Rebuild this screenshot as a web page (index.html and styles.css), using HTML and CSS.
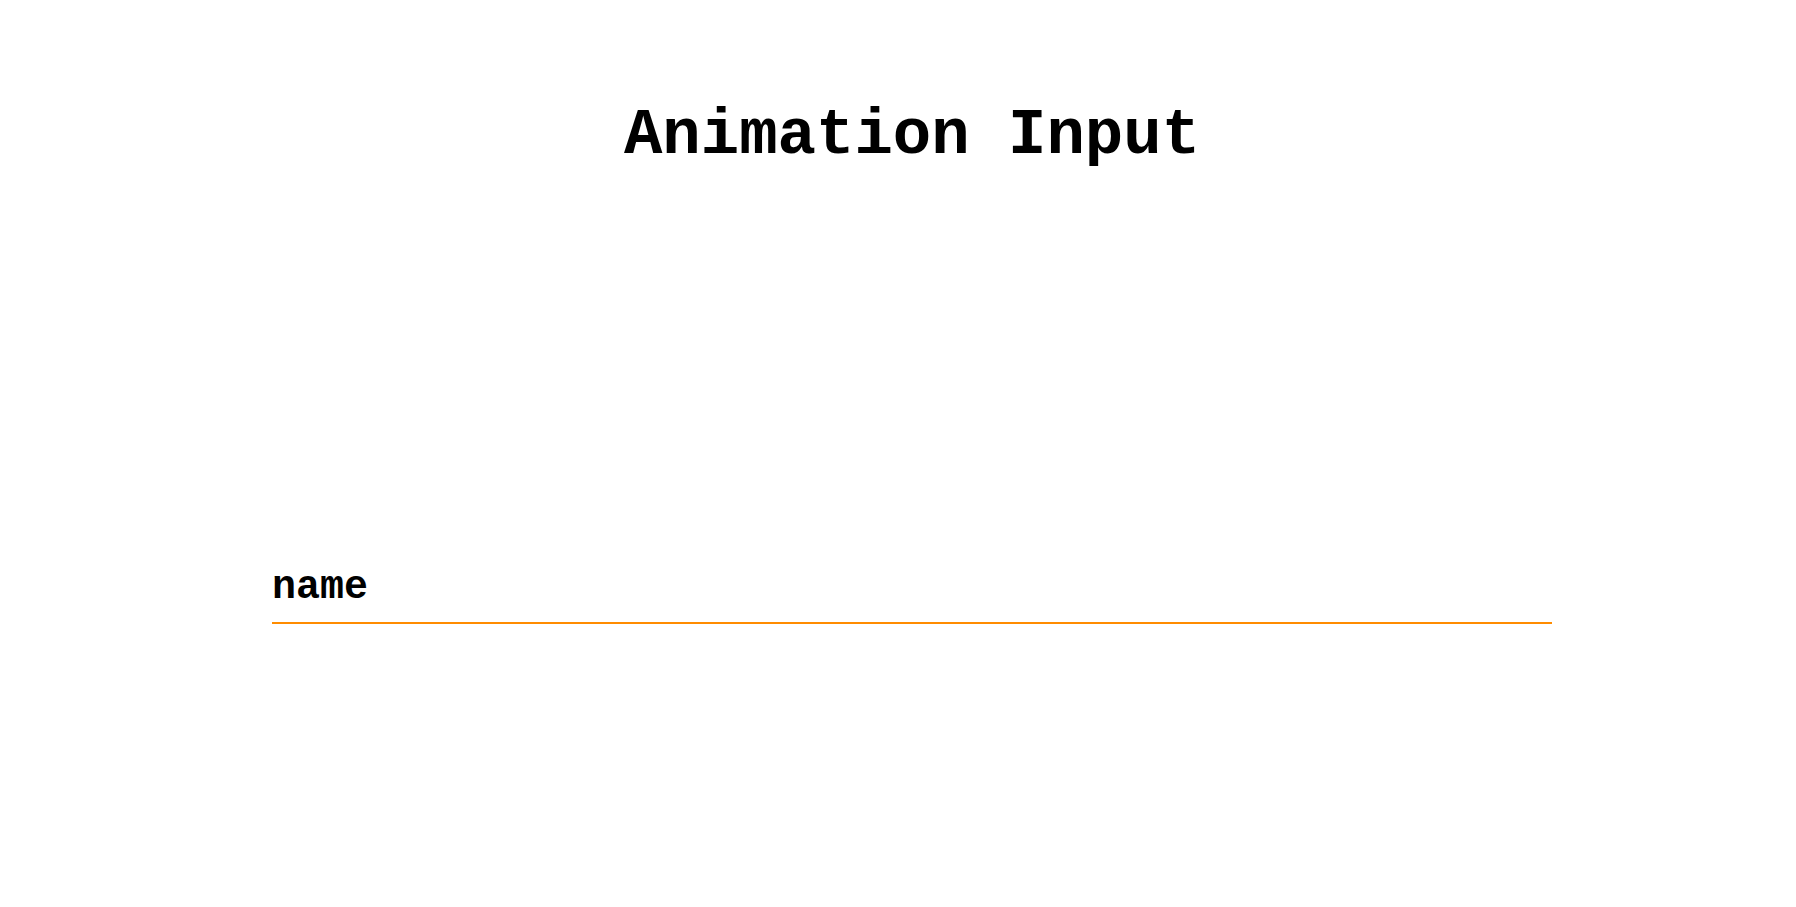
FILE: index.html
```html
<!DOCTYPE html>
<html>
<head>
<meta charset="utf-8">
<link rel="stylesheet" href="styles.css">
</head>
<body>
<main class="page">
  <h1 class="title">Animation Input</h1>
  <div class="field">
    <label class="label" for="name">name</label>
    <div class="underline"></div>
  </div>
</main>
</body>
</html>
```
FILE: styles.css
```css
html, body {
  margin: 0;
  padding: 0;
  background: #ffffff;
}
.page {
  font-family: "Courier New", "Liberation Mono", monospace;
  color: #000;
  display: flex;
  flex-direction: column;
  align-items: center;
  padding-left: 28px;
}
.title {
  margin: 0;
  padding-top: 104px;
  font-size: 64px;
  font-weight: bold;
  line-height: 1;
}
.field {
  width: 1280px;
  margin-top: 400px;
  display: flex;
  flex-direction: column;
}
.label {
  font-size: 40px;
  font-weight: bold;
  line-height: 1;
}
.underline {
  margin-top: 14px;
  height: 2px;
  background: #ff8c00;
}
```
